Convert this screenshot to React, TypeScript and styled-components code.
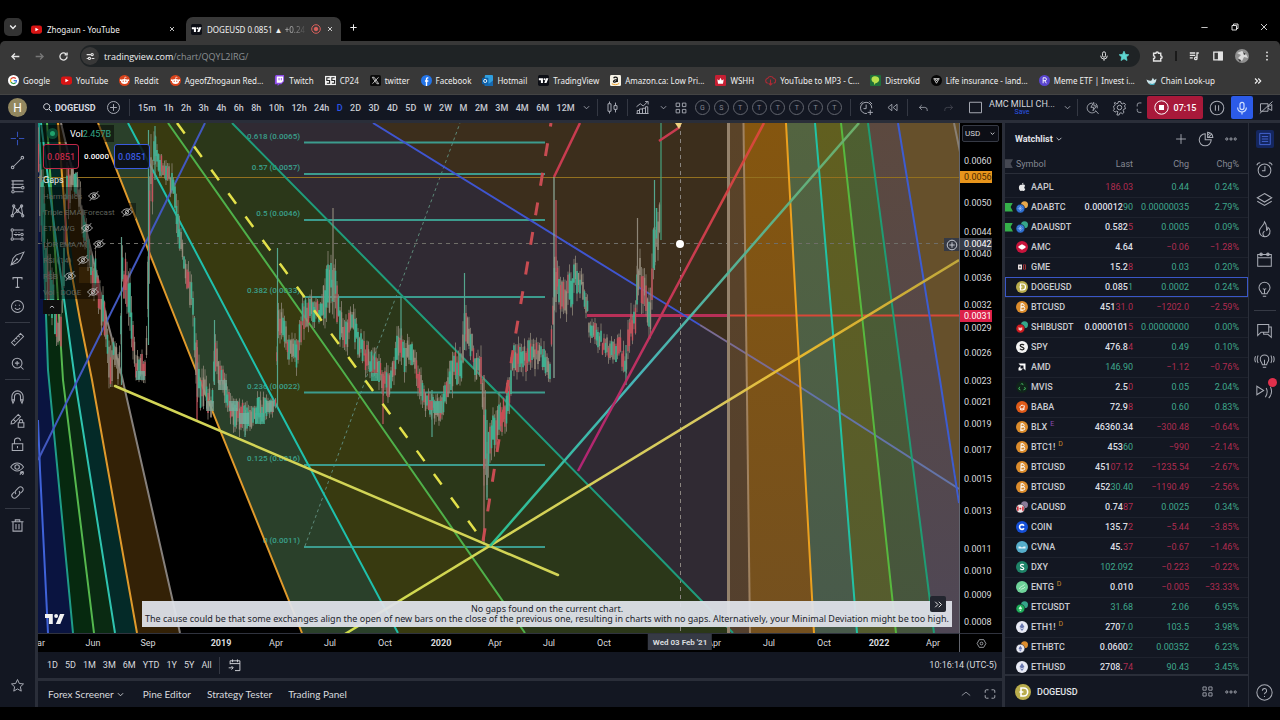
import React from "react";
import styled, { createGlobalStyle } from "styled-components";

const C = {
  panel: "#131722",
  line: "#2a2e39",
  text: "#c9ccd4",
  icon: "#a9acb5",
  up: "#3fa78c",
  down: "#b02c50",
  blue: "#2b55e8",
};

const Global = createGlobalStyle`
  * { box-sizing: border-box; }
  html, body { margin: 0; background: #000; }
  body { font-family: Roboto, "Open Sans", sans-serif; font-size: 10px; color: ${C.text}; }
  button, input { font: inherit; color: inherit; background: none; border: 0; padding: 0; margin: 0; }
  button { cursor: pointer; }
  a { color: inherit; text-decoration: none; }
`;

/* ---------- icons ---------- */

const icons: Record<string, React.ReactNode> = {
  chevron: <path d="M6 8l4 4 4-4" />,
  chevronUp: <path d="M3 12.500l7-5.500 7 5.500" />,
  close: <path d="M5 5l10 10M15 5L5 15" />,
  plus: <path d="M10 3v14M3 10h14" />,
  minus: <path d="M3 10h14" />,
  restore: <path d="M4 7h9v9H4zM7 7V4h9v9h-3" />,
  back: <path d="M17 10H4M9 4.500L3.500 10 9 15.500" />,
  forward: <path d="M3 10h13M11 4.500l5.500 5.500-5.500 5.500" />,
  reload: <path d="M16.500 10a6.500 6.500 0 1 1-2-4.700M16.500 2.500v4.500H12" />,
  site: <path d="M3 6.500h7M3 13.500h2M12 13.500h5M13 4.500a2 2 0 1 0 .01 0M8 11.500a2 2 0 1 0 .01 0" />,
  mic: <path d="M10 3a2.500 2.500 0 0 0-2.500 2.500v4a2.500 2.500 0 0 0 5 0v-4A2.500 2.500 0 0 0 10 3zM4.500 9.500a5.500 5.500 0 0 0 11 0M10 15v3" />,
  puzzle: <path d="M4 5h3.500a2 2 0 0 1 4 0H15v4a2 2 0 0 1 0 4v4H4v-4a2 2 0 0 0 0-4z" />,
  playlist: <path d="M3 5h9M3 9h9M3 13h5M15 14V5h3M15 14a2 2 0 1 1-4 0 2 2 0 0 1 4 0" />,
  sidePanel: (
    <>
      <path d="M3 3.500h14v13H3z" />
      <path d="M11 4h6v12h-6z" fill="currentColor" />
    </>
  ),
  dots: <path d="M10 4v.1M10 10v.1M10 16v.1" strokeWidth={3} strokeLinecap="round" />,
  more: (
    <>
      <circle cx="4" cy="10" r="1.600" />
      <circle cx="10" cy="10" r="1.600" />
      <circle cx="16" cy="10" r="1.600" />
    </>
  ),
  double: <path d="M4 5l5 5-5 5M10.500 5l5 5-5 5" />,
  search: <path d="M8.500 3a5.500 5.500 0 1 0 .01 0M12.500 12.500L17.500 17.500" />,
  plusCircle: (
    <>
      <circle cx="10" cy="10" r="8" />
      <path d="M10 5.500v9M5.500 10h9" />
    </>
  ),
  candles: <path d="M4 5h4v10H4zM6 2v3M6 15v3M12 7.500h4v5h-4zM14 3.500v4M14 12.500v4" />,
  indicators: <path d="M2 9l5-4 4 3 6-6M13.500 2h4v4M3 18v-4h3v4M6 18v-6h4v6M10 18v-7h4v7M14 18v-9h3v9zM2 18h16" />,
  grid: <path d="M3 3h5v5H3zM12 3h5v5h-5zM3 12h5v5H3zM12 12h5v5h-5z" strokeLinejoin="round" />,
  alarmPlus: <path d="M17 11a7.500 7.500 0 1 0-6.500 7M9.500 6v5.500H6M1.500 5.500l3.500-3.500M14 2l3.500 3.500M15 13v7M11.500 16.500h7" />,
  replay: <path d="M9 5v10l-6-5zM17 5v10l-6-5z" />,
  undo: <path d="M4 9h9a4 4 0 0 1 4 4v2M8 5L4 9l4 4" />,
  redo: <path d="M16 9H7a4 4 0 0 0-4 4v2M12 5l4 4-4 4" />,
  square: <path d="M2 3h16v14H2z" />,
  quick: <path d="M9 3a7 7 0 1 0 5 11.500M11 2l-4 7h4l-1 5 5-7h-3.500zM13.500 13.500l4.500 5M14 3.500a7 7 0 0 1 2 7" />,
  gear: (
    <>
      <circle cx="10" cy="10" r="3" />
      <path d="M8.500 2h3l.5 2.300 2 .9 2-1.300 2 2-1.300 2 .8 2 .5.600v1l-2.300.8-.8 2 1.200 2-2.100 2-2-1.300-2 .8-.5 2.200h-3L8 15.700l-2-.8-2 1.300-2.100-2.100 1.300-2-.8-2L2 9.500V8.500l1.500-.8.8-2L3 3.900l1.500-.6L6 5.100l2-.8z" />
    </>
  ),
  full: <path d="M13 3H9.500a3 3 0 0 0-3 3v2.500M6.500 12v2.500a3 3 0 0 0 3 3H13" />,
  pause: (
    <>
      <circle cx="10" cy="10" r="8.500" />
      <path d="M8 6.500v7M12 6.500v7" />
    </>
  ),
  camOff: <path d="M2 5h10v10H2zM12 9l5-3v8l-5-3M1 18L18 2" />,
  cross: <path d="M10 1v7M10 12v7M1 10h7M12 10h7" />,
  trend: (
    <>
      <circle cx="3.500" cy="16.500" r="1.700" />
      <circle cx="16.500" cy="3.500" r="1.700" />
      <path d="M5 15L15 5" />
    </>
  ),
  fib: (
    <>
      <path d="M2 2.500h16M2 7h16M2 11.500h13M6 17h12M4 2.500v12" />
      <circle cx="17" cy="11.500" r="1.700" />
      <circle cx="4" cy="17" r="1.700" />
    </>
  ),
  pattern: (
    <>
      <path d="M3 16L5 5l5 5 5-6 2 12-7-6-6 6" />
      <circle cx="5" cy="4" r="1.500" />
      <circle cx="15.500" cy="4" r="1.500" />
      <circle cx="3" cy="17" r="1.500" />
      <circle cx="17" cy="17" r="1.500" />
      <circle cx="10" cy="11" r="1.500" />
    </>
  ),
  projection: (
    <>
      <path d="M5 4h13M5 10h9M5 16h9M3 6v8M8 10v2M12 10v2M8 7v1M12 7v1" />
      <circle cx="3" cy="4" r="1.600" />
      <circle cx="3" cy="16" r="1.600" />
      <circle cx="16" cy="16" r="1.600" />
      <circle cx="16" cy="10" r="1.600" />
    </>
  ),
  brush: <path d="M18.500 1.500L8 5.500 4 10l-2.500 8.500L10 15.500l4-4.500zM1.500 18.500L9.500 10.500M8.500 9.500l2 2" />,
  type: <path d="M4 6V3.500h12V6M10 3.500v13M7.500 16.500h5" />,
  smile: (
    <>
      <circle cx="10" cy="10" r="8" />
      <path d="M7.500 7.500v1.500M12.500 7.500v1.500M6.500 12a4 4 0 0 0 7 0" />
    </>
  ),
  ruler: <path d="M2 14L14 2l4 4L6 18zM5 11l2 2M8 8l2 2M11 5l2 2" />,
  zoomIn: (
    <>
      <circle cx="9.500" cy="9.500" r="6.500" />
      <path d="M9.500 6.500v6M6.500 9.500h6M14 14l4 4" />
    </>
  ),
  magnet: <path d="M2.500 10a7.500 7.500 0 0 1 15 0v5l-1.500 4-2-4v-5a4 4 0 0 0-8 0v5l-2 4-1.500-4zM2.500 14.500H6M14 14.500h3.500" />,
  drawLock: <path d="M2 11L11 2l3 3L5 14l-3.500.5zM4.500 8.500l3 3M11 13h7.500v6H11zM12.500 13v-2a2.200 2.200 0 0 1 4.400 0v2" />,
  lock: <path d="M3 9h14v9H3zM6 9V6a4 4 0 0 1 8-1M10 12v3" />,
  eye: (
    <>
      <path d="M1 8c5-7 12-7 17 0-5 7-12 7-17 0z" />
      <circle cx="9.500" cy="8" r="3" />
      <path d="M13 18l5-4M16 18a2 2 0 1 0-2-2" />
    </>
  ),
  eyeOff: (
    <>
      <path d="M1 10c5-7 13-7 18 0-5 7-13 7-18 0z" />
      <circle cx="10" cy="10" r="3" />
      <path d="M3 18L17 2" />
    </>
  ),
  link: <path d="M8 12a3.500 3.500 0 0 1 0-5l3.500-3.500a3.500 3.500 0 0 1 5 5L14 11M12 8a3.500 3.500 0 0 1 0 5l-3.500 3.500a3.500 3.500 0 0 1-5-5L6 9" />,
  trash: <path d="M2 5h16M7 5V2.500h6V5M4 5v12.500h12V5M8 8v7M12 8v7" />,
  star: <path d="M10 2l2.400 5.300 5.600.6-4.200 3.900 1.200 5.700-5-2.900-5 2.900 1.200-5.700L2 7.900l5.600-.6z" />,
  pie: <path d="M9 3.500a7.500 7.500 0 1 0 7.500 7.500H9zM12 1.500v6.500h6.500A6.500 6.500 0 0 0 12 1.500zM12 5.500l3-3M13 8l4-4" />,
  list: <path d="M2.500 2h15v16h-15zM5.500 6.500h9M5.500 10h9M5.500 13.500h9" />,
  alarm: (
    <>
      <circle cx="10" cy="11" r="7.500" />
      <path d="M10.500 6v5.500H7M1 5a4 4 0 0 1 4-3M19 5a4 4 0 0 0-4-3" />
    </>
  ),
  layers: <path d="M10 3l8.500 5-8.500 5-8.500-5zM1.500 12l8.500 5 8.500-5" />,
  flame: <path d="M10 1c0 4-6 6-6 11 0 4 3 6.500 6 6.500s7-2 6.500-7c-.3-2-1-3-2.500-4 0 2-.5 3-1.500 3.500C12.500 7 12 3 10 1zM10 18.500c-3-2-2-5 0-6.500" />,
  calendar: (
    <>
      <path d="M2 4h16v14H2zM2 8h16" />
      <circle cx="6" cy="4" r="1.500" />
      <circle cx="14" cy="4" r="1.500" />
    </>
  ),
  bulb: <path d="M7 15c0-2-3.500-3.500-3.500-7a6.500 6.500 0 0 1 13 0c0 3.500-3.500 5-3.500 7zM8 18h4M8 9l2 1 2-1M10 10v5" />,
  chat: <path d="M2 3h13v9H6l-4 4zM15 6h3v12l-4-3.500H9V12" />,
  bulbLive: <path d="M7.500 15c0-2-2.500-3.500-2.500-6.500a5 5 0 0 1 10 0c0 3-2.500 4.500-2.500 6.500zM8 18h4M10 9v6M2.500 4c-1.500 3-1.500 6 0 9M17.500 4c1.500 3 1.500 6 0 9M-.5 5c-1 2-1 5 0 7M20.500 5c1 2 1 5 0 7" />,
  stream: <path d="M1 5l8 5-8 5zM12 7c2 4 1 8-1 11M17 6c2.500 5 1.500 9-2 13" />,
  help: (
    <>
      <circle cx="10" cy="10" r="9" />
      <path d="M7.500 8a2.500 2.500 0 1 1 3.500 2.200c-.8.4-1 .8-1 1.800M10 14v1.200" />
    </>
  ),
  goto: <path d="M3 9V4h14v14H10M3 8h14M6.500 2v4M13.500 2v4M1 14h6M5 11.500L7.500 14 5 16.500" />,
  target: (
    <>
      <path d="M6 3h8l4 7-4 7H6l-4-7z" />
      <circle cx="10" cy="10" r="2.500" />
    </>
  ),
  maximize: <path d="M2 8V5a2 2 0 0 1 2-2h3.500M12.500 3H16a2 2 0 0 1 2 2v3M18 12v3a2 2 0 0 1-2 2h-3.500M7.500 17H4a2 2 0 0 1-2-2v-3" />,
};

const Svg = styled.svg`
  display: block;
  flex: none;
  overflow: visible;
`;

function Icon({ name, size = 16, weight = 1.3, fill = "none" }: { name: string; size?: number; weight?: number; fill?: string }) {
  return (
    <Svg width={size} height={size} viewBox="0 0 20 20" fill={fill} stroke="currentColor" strokeWidth={weight} aria-hidden>
      {icons[name]}
    </Svg>
  );
}

/* ---------- browser frame ---------- */

const Page = styled.div`
  min-height: 100vh;
  display: flex;
  flex-direction: column;
  padding-bottom: 13px;
  background: #000;
`;

const TabStrip = styled.header`
  height: 41px;
  padding: 13px 3px 0 4px;
  display: flex;
  align-items: center;
  font-family: "Noto Sans", "Open Sans", sans-serif;
  font-size: 8px;
  color: #f0f0f0;
`;

const TabMenu = styled.button`
  width: 18px;
  height: 18px;
  border-radius: 5px;
  background: #333;
  display: grid;
  place-items: center;
`;

const Tab = styled.div<{ $active?: boolean }>`
  width: 155px;
  height: 24px;
  margin-left: ${(p) => (p.$active ? 1 : 8)}px;
  align-self: flex-end;
  padding: 0 7px 0 ${(p) => (p.$active ? 5 : 1)}px;
  border-radius: 7px 7px 0 0;
  background: ${(p) => (p.$active ? "#383838" : "transparent")};
  display: flex;
  align-items: center;
  gap: 5px;
`;

const TabTitle = styled.span`
  flex: 1;
  min-width: 0;
  white-space: nowrap;
`;

const Fade = styled.span`
  background: linear-gradient(90deg, #e4e4e4, #4a4a4a);
  background-clip: text;
  color: transparent;
`;

const Plain = styled.button<{ $w?: number; $color?: string }>`
  width: ${(p) => p.$w ?? 12}px;
  flex: none;
  display: grid;
  place-items: center;
  color: ${(p) => p.$color ?? "inherit"};
`;

const WindowButtons = styled.div`
  margin-left: auto;
  display: flex;
`;

const Toolbar = styled.div`
  height: 26px;
  padding: 4px 0 0 3px;
  background: #383838;
  border-radius: 5px 5px 0 0;
  display: flex;
  align-items: center;
  color: #e4e4e4;
`;

const Omnibox = styled.div`
  flex: 1;
  height: 22px;
  margin: 0 4px 0 5px;
  padding: 0 9px 0 1px;
  border-radius: 11px;
  background: #1f2325;
  display: flex;
  align-items: center;
  gap: 5px;
`;

const SiteChip = styled.button`
  width: 18px;
  height: 18px;
  border-radius: 9px;
  background: #383838;
  display: grid;
  place-items: center;
`;

const Url = styled.a`
  flex: 1;
  font-family: "Open Sans", "Noto Sans", sans-serif;
  font-size: 9px;
  color: #8d9194;
  b { font-weight: 400; color: #f1f1f1; }
`;

const ToolRule = styled.span`
  width: 2px;
  height: 10px;
  margin: 0 5px;
  background: #1a1a1a;
`;

const Avatar = styled.svg`
  width: 14px;
  height: 14px;
  margin: 0 5px;
`;

const Bookmarks = styled.nav`
  height: 28px;
  padding: 0 17px 0 8px;
  background: #383838;
  border-bottom: 1px solid #444;
  display: flex;
  align-items: center;
  gap: 11px;
  font-family: "Noto Sans", "Open Sans", sans-serif;
  font-size: 8px;
  color: #f0f0f0;
  overflow: hidden;
`;

const Bookmark = styled.a`
  display: flex;
  align-items: center;
  gap: 4px;
  white-space: nowrap;
`;

const MoreBookmarks = styled.button`
  margin-left: auto;
`;

const YouTubeMark = () => (
  <Svg width="11" height="11" viewBox="0 0 12 12">
    <rect y="1.500" width="12" height="9" rx="2.500" fill="#d81414" />
    <path d="M4.800 4l3.600 2-3.600 2z" fill="#fff" />
  </Svg>
);
const TvMark = () => (
  <Svg width="11" height="11" viewBox="0 0 20 20">
    <rect width="20" height="20" rx="3" fill="#0c0e15" />
    <path d="M1.500 6h7.500v8.500H5.300V9.500H1.500zM14.500 6h4.500l-3.600 8.500h-4z" fill="#fff" />
    <circle cx="11.800" cy="7.800" r="1.800" fill="#fff" />
  </Svg>
);
const Reddit = () => (
  <Svg width="11" height="11" viewBox="0 0 12 12">
    <circle cx="6" cy="6" r="6" fill="#d8431c" />
    <ellipse cx="6" cy="7" rx="3.800" ry="2.700" fill="#fff" />
    <path d="M6 4.300l.5-2 1.600.4" stroke="#fff" fill="none" strokeWidth=".7" />
    <circle cx="4.600" cy="6.700" r=".7" fill="#d8431c" />
    <circle cx="7.400" cy="6.700" r=".7" fill="#d8431c" />
    <circle cx="2" cy="5.600" r="1" fill="#fff" />
    <circle cx="10" cy="5.600" r="1" fill="#fff" />
  </Svg>
);
const B = ({ children }: { children: React.ReactNode }) => (
  <Svg width="11" height="11" viewBox="0 0 12 12">{children}</Svg>
);

const bookmarks: [string, React.ReactNode][] = [
  ["Google", <B key="i"><circle cx="6" cy="6" r="6" fill="#fff" /><path d="M8.500 4A3.300 3.300 0 0 0 3 4.700" stroke="#e0402f" strokeWidth="1.300" fill="none" /><path d="M3 4.700a3.300 3.300 0 0 0 .2 3" stroke="#f0b400" strokeWidth="1.300" fill="none" /><path d="M3.200 7.700a3.300 3.300 0 0 0 5 .8" stroke="#2f9e4c" strokeWidth="1.300" fill="none" /><path d="M8.200 8.500A3 3 0 0 0 9.200 6.200H6.200" stroke="#3b78e7" strokeWidth="1.300" fill="none" /></B>],
  ["YouTube", <YouTubeMark key="i" />],
  ["Reddit", <Reddit key="i" />],
  ["AgeofZhogaun Red...", <Reddit key="i" />],
  ["Twitch", <B key="i"><path d="M2 0h9v7L8 10H6l-2 2v-2H1V2z" fill="#8d4be8" /><path d="M3 1.500h7v5L8 8.500H3z" fill="#fff" /><path d="M5.500 3.200v2.600M8 3.200v2.600" stroke="#8d4be8" /></B>],
  ["CP24", <B key="i"><path d="M0 1h12v10H0z" fill="#f2f2f2" /><path d="M5 3H2v3h3v3H2M10.500 3h-3v3h3v3h-3" stroke="#222" strokeWidth="1.200" fill="none" /></B>],
  ["twitter", <B key="i"><rect width="12" height="12" rx="2" fill="#0b0b0b" /><path d="M2.500 2.500h2l5 7h-2zM9.300 2.500L2.700 9.500" stroke="#ddd" strokeWidth=".9" fill="none" /></B>],
  ["Facebook", <B key="i"><circle cx="6" cy="6" r="6" fill="#2374e8" /><path d="M8 3.200H7c-.8 0-1 .5-1 1.100V12M4.300 6.500H8" stroke="#fff" strokeWidth="1.500" fill="none" /></B>],
  ["Hotmail", <B key="i"><rect x="3" y="0" width="9" height="12" rx="1" fill="#2f9fe0" /><path d="M3 7l4.500 2.500L12 6v6H3z" fill="#1668b0" /><rect y="3" width="7" height="7" rx="1" fill="#0c5fa8" /><circle cx="3.500" cy="6.500" r="1.700" stroke="#fff" fill="none" /></B>],
  ["TradingView", <TvMark key="i" />],
  ["Amazon.ca: Low Pri...", <B key="i"><rect width="12" height="12" rx="1.500" fill="#f6f2e6" /><path d="M4 3.500c.5-1.500 4-1.700 4 .3V7.500M8 5c-5 0-5 3-2.800 2.800C7 7.600 8 6.500 8 5" stroke="#111" strokeWidth="1.300" fill="none" /><path d="M2 9.500c3 1.700 5.500 1.300 8-.3" stroke="#f19a1a" strokeWidth="1" fill="none" /></B>],
  ["WSHH", <B key="i"><rect width="12" height="12" rx="1.500" fill="#c61f33" /><path d="M2.500 4.500l2 1.500L6 3l1.500 3 2-1.500L8.700 9.500H3.300z" fill="#fff" /></B>],
  ["YouTube to MP3 - C...", <B key="i"><path d="M3 9a2.800 2.800 0 0 1 0-5.500 3.500 3.500 0 0 1 6.200 0A2.800 2.800 0 0 1 9.500 9M6 5v6M4 9l2 2 2-2" stroke="#b12a35" strokeWidth="1.200" fill="none" /></B>],
  ["DistroKid", <B key="i"><rect width="12" height="12" rx="1" fill="#1f6f3a" /><path d="M2 3c2-2.500 8-2 8 2 0 3-3 4-4 4L5 11 4 8C2 7.500 1 5 2 3z" fill="#b7e04c" /></B>],
  ["Life insurance - land...", <B key="i"><circle cx="6" cy="6" r="6" fill="#060606" /><path d="M3 4h6L6 9zM4.500 4L6 6.500 7.500 4" stroke="#fff" strokeWidth=".8" fill="none" /></B>],
  ["Meme ETF | Invest i...", <B key="i"><circle cx="6" cy="6" r="6" fill="#5a45d0" /><path d="M4.500 9V3h2a1.600 1.600 0 0 1 0 3.200h-2M6.300 6.200L8 9" stroke="#fff" strokeWidth="1" fill="none" /></B>],
  ["Chain Look-up", <B key="i"><path d="M.5 5c1 4 3 6 6 5.500S11 8 11.500 4L9 5.500 7.500 3 6 6C4 6.500 2 6 .5 5z" fill="#cfe6ea" /><path d="M3 8c2 2 5 2.500 7 0l-1 3H5z" fill="#39a5b8" /></B>],
];

/* ---------- chart header ---------- */

const Header = styled.div`
  height: 28px;
  padding-left: 8px;
  background: ${C.panel};
  border-bottom: 3px solid ${C.line};
  display: flex;
  align-items: center;
  color: ${C.icon};
`;

const UserBadge = styled.button`
  width: 19px;
  height: 19px;
  flex: none;
  border-radius: 50%;
  background: #92875f;
  color: #fff;
  font-size: 12px;
`;

const SymbolSearch = styled.button`
  margin-left: 15px;
  width: 56px;
  display: flex;
  align-items: center;
  gap: 2px;
  font-size: 9px;
  font-weight: 700;
  color: #d8dae0;
`;

const Rule = styled.span<{ $l?: number; $r?: number }>`
  width: 1px;
  height: 17px;
  flex: none;
  margin: 0 ${(p) => p.$r ?? 0}px 0 ${(p) => p.$l ?? 0}px;
  background: #343843;
`;

const Intervals = styled.div`
  flex: 0 0 437px;
  display: flex;
  justify-content: space-between;
  font-size: 9px;
  font-weight: 500;
  color: #c6c9d1;
`;

const Interval = styled.button<{ $on?: boolean }>`
  color: ${(p) => (p.$on ? C.blue : "inherit")};
`;

const Templates = styled.div`
  flex: 0 0 147px;
  display: flex;
  justify-content: space-between;
  margin: 0 8px 0 2px;
`;

const Template = styled.button`
  width: 15px;
  height: 15px;
  border: 1px solid #62656e;
  border-radius: 50%;
  font-size: 7px;
  color: #858892;
  display: grid;
  place-items: center;
`;

const RightTools = styled.div`
  margin-left: auto;
  height: 25px;
  display: flex;
  align-items: center;
`;

const LayoutName = styled.button`
  width: 70px;
  text-align: center;
  font-size: 9px;
  line-height: 9px;
  color: #d4d6dc;
  white-space: nowrap;
  small { display: block; font-size: 7px; line-height: 7px; color: ${C.blue}; }
`;

const Record = styled.button`
  width: 56px;
  height: 23px;
  border-radius: 2px;
  background: #a8193a;
  color: #fff;
  font-weight: 500;
  font-size: 9px;
  display: flex;
  align-items: center;
  justify-content: center;
  gap: 5px;
`;

const MicButton = styled.button`
  width: 22px;
  height: 23px;
  border-radius: 2px;
  background: #2c5be8;
  color: #cfe0ff;
  display: grid;
  place-items: center;
`;

/* ---------- body ---------- */

const Main = styled.main`
  flex: 1;
  min-height: 584px;
  display: flex;
  background: ${C.line};
  gap: 3px;
`;

const Tools = styled.nav`
  width: 35px;
  flex: none;
  padding: 3px 0 10px;
  background: ${C.panel};
  color: ${C.icon};
  display: flex;
  flex-direction: column;
  align-items: center;
`;

const Tool = styled.button<{ $last?: boolean; $on?: boolean }>`
  width: 34px;
  height: 24px;
  display: grid;
  place-items: center;
  color: ${(p) => (p.$on ? "#3350b8" : "inherit")};
  margin-top: ${(p) => (p.$last ? "auto" : 0)};
`;

const ToolDivider = styled.span`
  width: 25px;
  height: 1px;
  margin: 4px 0;
  background: #363a45;
`;

const ChartColumn = styled.section`
  flex: 1;
  min-width: 0;
  display: flex;
  flex-direction: column;
`;

const ChartGrid = styled.div`
  flex: 1;
  display: grid;
  grid-template-columns: 1fr 43px;
  grid-template-rows: 1fr 19px;
  background: #000;
`;

const Plot = styled.div`
  position: relative;
  overflow: hidden;
`;

const Canvas = styled.svg`
  position: absolute;
  inset: 0;
  width: 100%;
  height: 100%;
`;

const PriceAxis = styled.div`
  position: relative;
  border-left: 1px solid #62656e;
  color: #d8dade;
`;

const Currency = styled.select`
  position: absolute;
  top: 2px;
  left: 2px;
  width: 37px;
  height: 17px;
  padding: 0 0 0 2px;
  border: 1px solid #363a45;
  border-radius: 2px;
  background: #0c0e15;
  color: #d5d7dc;
  font: 8px Roboto, sans-serif;
  appearance: none;
`;

const CurrencyArrow = styled.span`
  position: absolute;
  top: 6px;
  right: 5px;
`;

const Price = styled.span<{ $bg?: string; $color?: string }>`
  position: absolute;
  left: 0;
  width: 32px;
  height: 12px;
  line-height: 12px;
  margin-top: -6px;
  padding-left: 4px;
  font-size: 9px;
  background: ${(p) => p.$bg ?? "transparent"};
  color: ${(p) => p.$color ?? "inherit"};
`;

const TimeAxis = styled.div`
  position: relative;
  overflow: hidden;
  border-top: 1px solid #30333e;
  font-size: 9px;
  color: #d8dade;
`;

const Time = styled.span<{ $mark?: boolean; $year?: boolean }>`
  position: absolute;
  top: 0;
  height: 16px;
  line-height: 18px;
  transform: translateX(-50%);
  white-space: nowrap;
  padding: 0 ${(p) => (p.$mark ? 5 : 0)}px;
  font-size: ${(p) => (p.$mark ? 8 : 9)}px;
  font-weight: ${(p) => (p.$mark || p.$year ? 700 : 400)};
  background: ${(p) => (p.$mark ? "#363a45" : "transparent")};
`;

const Corner = styled.div`
  border-top: 1px solid #30333e;
  border-left: 1px solid #62656e;
  display: grid;
  place-items: center;
`;

const Legend = styled.div`
  position: absolute;
  top: 2px;
  left: 2px;
  display: flex;
  flex-direction: column;
  align-items: flex-start;
  font-size: 9px;
`;

const LegendTop = styled.div`
  height: 17px;
  padding: 0 3px 0 10px;
  background: rgba(0, 0, 0, 0.5);
  display: flex;
  align-items: center;
  color: #fff;
  i { width: 5px; height: 5px; margin-right: 15px; border-radius: 50%; background: #21a36c; box-shadow: 0 0 0 3px #0c4a33; }
  em { font-style: normal; color: #35a384; }
`;

const Quote = styled.div`
  display: flex;
  align-items: center;
  gap: 5px;
  padding: 2px 0 2px 3px;
  font-size: 8px;
  font-weight: 500;
  color: #fff;
`;

const QuoteButton = styled.button<{ $color: string }>`
  width: 36px;
  height: 25px;
  border: 1px solid ${(p) => p.$color};
  border-radius: 3px;
  background: rgba(8, 10, 20, 0.85);
  color: ${(p) => p.$color};
  font-size: 9px;
`;

const Study = styled.div<{ $on?: boolean }>`
  height: 16px;
  padding: 2px 3px 0;
  display: flex;
  align-items: center;
  gap: 6px;
  white-space: nowrap;
  font-size: ${(p) => (p.$on ? 9 : 8)}px;
  color: ${(p) => (p.$on ? "#e6e6e6" : "#5f625b")};
  background: rgba(0, 0, 0, ${(p) => (p.$on ? 0 : 0.4)});
  svg { color: #b4b4b4; }
`;

const Collapse = styled.button`
  width: 18px;
  height: 14px;
  margin: 1px 0 0 3px;
  background: #0f0f0f;
  display: grid;
  place-items: center;
`;

const Watermark = styled.div`
  position: absolute;
  left: 7px;
  bottom: 8px;
`;

const Notice = styled.div`
  position: absolute;
  left: 104px;
  right: 7px;
  bottom: 6px;
  height: 26px;
  padding-top: 3px;
  background: rgba(222, 225, 233, 0.95);
  color: #23252c;
  text-align: center;
  font-family: "Noto Sans", "Open Sans", sans-serif;
  font-size: 9px;
  line-height: 10px;
  white-space: nowrap;
`;

const Scroll = styled.button`
  position: absolute;
  right: 13px;
  bottom: 21px;
  width: 16px;
  height: 16px;
  border-radius: 2px;
  background: #23262f;
  color: #e6e6e6;
  display: grid;
  place-items: center;
`;

const AddAlert = styled.button`
  position: absolute;
  right: 0;
  width: 15px;
  height: 13px;
  margin-top: -6px;
  background: #363a45;
  display: grid;
  place-items: center;
`;

const Ranges = styled.div`
  height: 26px;
  padding: 0 5px 0 9px;
  background: ${C.panel};
  display: flex;
  align-items: center;
  gap: 7px;
  font-size: 9px;
  color: #d8dade;
  time { margin-left: auto; }
`;

const BottomTabs = styled.div`
  height: 26px;
  margin-top: 3px;
  padding: 0 6px 0 10px;
  background: ${C.panel};
  display: flex;
  align-items: center;
  font-family: Lato, Roboto, sans-serif;
  font-size: 10px;
  color: #d8dade;
  button { display: flex; align-items: center; margin-right: 16px; }
`;

const BottomRight = styled.div`
  margin-left: auto;
  display: flex;
  gap: 12px;
  color: ${C.icon};
`;

/* ---------- watchlist ---------- */

const Side = styled.aside`
  width: 243px;
  flex: none;
  background: ${C.panel};
  display: flex;
  flex-direction: column;
`;

const SideHead = styled.div`
  height: 32px;
  padding: 0 10px;
  flex: none;
  display: flex;
  align-items: center;
  gap: 10px;
  color: ${C.icon};
`;

const SideTitle = styled.button`
  margin-right: auto;
  display: flex;
  align-items: center;
  font-size: 9px;
  font-weight: 700;
  color: #e2e4e9;
`;

const ListClip = styled.div`
  flex: 1 1 0;
  min-height: 0;
  overflow: hidden;
`;

const List = styled.table`
  width: 100%;
  border-collapse: collapse;
  table-layout: fixed;
  font-size: 9px;
  th, td { padding: 0; text-align: right; font-weight: 400; white-space: nowrap; }
  th { height: 18px; color: #858892; border-bottom: 1px solid ${C.line}; }
  th:first-child, td:first-child { text-align: left; }
  th:last-child, td:last-child { padding-right: 9px; }
`;

const Spacer = styled.tr`
  height: 4px;
`;

const Row = styled.tr<{ $selected?: boolean }>`
  height: 20px;
  border-bottom: 1px solid #1e222d;
  ${(p) => p.$selected && `outline: 1px solid #3a57c8; outline-offset: -1px;`}
`;

const Name = styled.div<{ $head?: boolean }>`
  display: flex;
  align-items: center;
  gap: 3px;
  font-weight: ${(p) => (p.$head ? 400 : 500)};
  color: ${(p) => (p.$head ? "inherit" : "#c8cad0")};
`;

const Sup = styled.sup<{ $color: string }>`
  align-self: flex-start;
  font-size: 7px;
  line-height: 7px;
  font-weight: 400;
  color: ${(p) => p.$color};
`;

const Flag = styled.i<{ $color: string }>`
  width: 8px;
  height: 9px;
  background: ${(p) => p.$color};
  clip-path: polygon(0 0, 100% 0, 70% 50%, 100% 100%, 0 100%);
`;

const Num = styled.td<{ $color: string }>`
  color: ${(p) => p.$color};
  span { color: #dcdee3; font-weight: 500; }
`;

const SideFoot = styled.div`
  height: 33px;
  padding: 0 10px;
  border-top: 2px solid ${C.line};
  display: flex;
  align-items: center;
  gap: 10px;
  color: ${C.icon};
  strong { flex: 1; margin-left: -4px; font-size: 9px; font-weight: 500; color: #e2e4e9; }
`;

const Rail = styled.nav`
  width: 31px;
  flex: none;
  margin-left: -2px;
  padding-top: 1px;
  background: ${C.panel};
  color: ${C.icon};
  display: flex;
  flex-direction: column;
  align-items: center;
`;

const RailButton = styled.button<{ $on?: boolean; $last?: boolean }>`
  position: relative;
  width: 30px;
  height: 30px;
  margin-top: ${(p) => (p.$last ? "auto" : 0)};
  display: grid;
  place-items: center;
  color: ${(p) => (p.$on ? "#4a6de0" : "inherit")};
  &::before {
    content: "";
    display: ${(p) => (p.$on ? "block" : "none")};
    position: absolute;
    inset: 6px;
    border-radius: 2px;
    background: #14265f;
  }
  svg { position: relative; }
`;

const RailDivider = styled.span`
  width: 22px;
  height: 1px;
  margin: 6px 0 4px;
  background: #363a45;
`;

const RailDot = styled.i`
  position: absolute;
  top: 3px;
  right: 3px;
  width: 9px;
  height: 9px;
  border-radius: 50%;
  background: #e0304c;
`;

/* mark drawn over a coin disc: shapes in a 12 x 12 box */
const marks: Record<string, React.ReactNode> = {
  apple: <path d="M6 4c1-.7 3-.5 3 1.200-1 .6-1 2.300.3 2.800C8.800 9.500 8 10.200 7.200 9.900c-.8-.3-1.400-.3-2.200 0C3.500 10.200 2.300 6.500 3.300 5c.7-1.200 2-1.300 2.700-1zM6 3.400c0-1 .6-1.600 1.400-1.700 0 1-.5 1.600-1.400 1.700z" fill="#e8e8e8" />,
  ada: <path d="M6 2.500v7M2.500 6h7M3.500 3.500l5 5M8.500 3.500l-5 5" stroke="#cfe0ff" strokeWidth=".9" strokeDasharray="1 .8" />,
  amc: <path d="M2.500 5.200l3.500-2 3.500 2v1.600l-3.500 2-3.500-2z" fill="#fff" />,
  gme: <><path d="M2 3.500h4v5H2z" fill="#e8e0e0" /><path d="M7 3.500h3v5H7z" fill="#a03038" /><path d="M4 5v2M8.500 4v4" stroke="#222" /></>,
  doge: <path d="M4.500 3h2a3 3 0 0 1 0 6h-2zM3.300 6h3" stroke="#fff" strokeWidth="1.200" fill="none" />,
  btc: <path d="M5 3h1.700a1.400 1.400 0 0 1 0 2.900H5M5 5.900h2.200a1.500 1.500 0 0 1 0 3.100H4.600M5.200 2.300L4.800 9.700M6.500 2.200l-.1 1M6.100 9l-.1 1" stroke="#fff" strokeWidth="1" fill="none" />,
  shib: <path d="M3.500 4l1.500 1h2l1.500-1v3.500L6 9 3.500 7.500z" fill="#f4c8c0" />,
  spy: <path d="M8 4.200C7.200 3 4.200 3 4.200 4.600S8 6 8 7.600 4.800 9.200 4 7.800" stroke="#222" strokeWidth="1.300" fill="none" />,
  amd: <path d="M2.500 2.500h7v7L7.500 7.600V4.500H4.400zM2.500 7l2-2v2.500H7l-2 2H2.500z" fill="#fff" />,
  mvis: <path d="M5 3.500l1-1.200 1.200 1.800M8.500 6l1 2-2 .8M4.500 9L2.700 8l1-2.200" stroke="#3fae5a" strokeWidth="1" fill="none" />,
  baba: <path d="M7.500 4.500C5.500 3.500 4 5 4 6.500s2 2 4 .5l.3-2.500M4 8.500c2 1 4 .3 4.800-.8" stroke="#fff" strokeWidth="1" fill="none" />,
  cad: <><path d="M2.500 3v6M9.500 3v6" stroke="#d02030" strokeWidth="2" /><circle cx="6" cy="6" r="1.300" fill="#d02030" /></>,
  coin: <path d="M8 4.700a2.400 2.400 0 1 0 0 2.600" stroke="#fff" strokeWidth="1.600" fill="none" />,
  cvna: <path d="M2.500 7.500v-2h1.700L6 6.500l1.800-1h1.700v2z" fill="#e4f4fa" />,
  dxy: <path d="M7.800 4.200C7 3 4.500 3.200 4.500 4.700S7.800 6 7.800 7.500 5 9 4.200 7.700" stroke="#fff" strokeWidth="1.200" fill="none" />,
  entg: <path d="M3.500 8C4 5 6 6 8.500 3.500M4.500 9C6 7 8 8 9 6" stroke="#c8f4d8" strokeWidth="1" fill="none" />,
  etc: <path d="M6 2.500L8.500 6 6 7.200 3.500 6zM3.700 7L6 8.200 8.300 7 6 9.800z" fill="#d8ffe6" />,
  eth: <path d="M6 2l2.500 4L6 7.500 3.500 6zM3.700 7L6 8.300 8.300 7 6 10z" fill="#6a78b0" />,
};

function CoinLogo({ logo, bg, pair, size = 12 }: { logo: string; bg: string; pair?: string; size?: number }) {
  return (
    <Svg width={size} height={size} viewBox="0 0 12 12">
      {pair && <circle cx="8.500" cy="3.700" r="3.500" fill={pair} />}
      <g transform={pair ? "translate(0 3.200) scale(.73)" : undefined}>
        <circle cx="6" cy="6" r="6" fill={bg} stroke={pair ? C.panel : "none"} strokeWidth=".7" />
        {marks[logo]}
      </g>
    </Svg>
  );
}

interface Item {
  s: string; logo: string; bg: string; pair?: string; w?: string; c?: string; last?: "u" | "d"; chg: string; pct: string; sup?: string; flag?: boolean;
}
const orange = "#dc8c2c";
const white = "#e8eaf4";
const items: Item[] = [
  { s: "AAPL", logo: "apple", bg: C.panel, c: "186.03", last: "d", chg: "0.44", pct: "0.24%" },
  { s: "ADABTC", logo: "ada", bg: "#2f6fd0", pair: "#e8a84a", w: "0.000012", c: "90", last: "u", chg: "0.00000035", pct: "2.79%", flag: true },
  { s: "ADAUSDT", logo: "ada", bg: "#2f6fd0", pair: "#35a58a", w: "0.582", c: "5", last: "d", chg: "0.0005", pct: "0.09%", flag: true },
  { s: "AMC", logo: "amc", bg: "#c8143c", w: "4.64", chg: "-0.06", pct: "-1.28%" },
  { s: "GME", logo: "gme", bg: C.panel, w: "15.2", c: "8", last: "d", chg: "0.03", pct: "0.20%" },
  { s: "DOGEUSD", logo: "doge", bg: "#b9ac4c", w: "0.085", c: "1", last: "u", chg: "0.0002", pct: "0.24%" },
  { s: "BTCUSD", logo: "btc", bg: orange, w: "451", c: "31.0", last: "d", chg: "-1202.0", pct: "-2.59%" },
  { s: "SHIBUSDT", logo: "shib", bg: "#d01c20", pair: "#35a58a", w: "0.0000101", c: "5", last: "d", chg: "0.00000000", pct: "0.00%" },
  { s: "SPY", logo: "spy", bg: "#f4f4f4", w: "476.8", c: "4", last: "d", chg: "0.49", pct: "0.10%" },
  { s: "AMD", logo: "amd", bg: C.panel, c: "146.90", last: "u", chg: "-1.12", pct: "-0.76%" },
  { s: "MVIS", logo: "mvis", bg: "#10241a", w: "2.5", c: "0", last: "d", chg: "0.05", pct: "2.04%" },
  { s: "BABA", logo: "baba", bg: "#e05a18", w: "72.9", c: "8", last: "d", chg: "0.60", pct: "0.83%" },
  { s: "BLX", logo: "btc", bg: orange, w: "46360.34", chg: "-300.48", pct: "-0.64%", sup: "E" },
  { s: "BTC1!", logo: "btc", bg: orange, w: "453", c: "60", last: "u", chg: "-990", pct: "-2.14%", sup: "D" },
  { s: "BTCUSD", logo: "btc", bg: orange, w: "451", c: "07.12", last: "d", chg: "-1235.54", pct: "-2.67%" },
  { s: "BTCUSD", logo: "btc", bg: orange, w: "452", c: "30.40", last: "u", chg: "-1190.49", pct: "-2.56%" },
  { s: "CADUSD", logo: "cad", bg: "#f0e4e6", pair: "#8a7a98", w: "0.74", c: "87", last: "d", chg: "0.0025", pct: "0.34%" },
  { s: "COIN", logo: "coin", bg: "#1650d8", w: "135.7", c: "2", last: "d", chg: "-5.44", pct: "-3.85%" },
  { s: "CVNA", logo: "cvna", bg: "#56aecb", w: "45.", c: "37", last: "d", chg: "-0.67", pct: "-1.46%" },
  { s: "DXY", logo: "dxy", bg: "#1f8468", c: "102.092", last: "u", chg: "-0.223", pct: "-0.22%" },
  { s: "ENTG", logo: "entg", bg: "#6fd39a", w: "0.010", chg: "-0.005", pct: "-33.33%", sup: "D" },
  { s: "ETCUSDT", logo: "etc", bg: "#1fae5a", pair: "#35a58a", c: "31.68", last: "u", chg: "2.06", pct: "6.95%" },
  { s: "ETH1!", logo: "eth", bg: white, w: "270", c: "7.0", last: "u", chg: "103.5", pct: "3.98%", sup: "D" },
  { s: "ETHBTC", logo: "eth", bg: white, pair: orange, w: "0.0600", c: "2", last: "u", chg: "0.00352", pct: "6.23%" },
  { s: "ETHUSD", logo: "eth", bg: white, w: "2708.", c: "74", last: "d", chg: "90.43", pct: "3.45%" },
];

const tone = (v: string) => (v.startsWith("-") ? C.down : C.up);

/* ---------- chart drawing ---------- */

/* price envelope: x, high, low */
const envelope: [number, number, number][] = [
  [38, 140, 200], [43, 180, 240], [48, 250, 310], [53, 280, 335], [58, 317, 350], [62, 290, 345], [66, 165, 240], [72, 160, 187], [78, 178, 205],
  [84, 200, 245], [90, 250, 290], [98, 262, 305], [104, 298, 340], [110, 335, 385], [115, 345, 375], [120, 350, 384], [122, 250, 300],
  [128, 262, 308], [133, 305, 352], [136, 350, 380], [145, 355, 382], [147, 330, 370], [149, 150, 270], [152, 160, 210], [155, 130, 160], [159, 150, 175],
  [168, 164, 182], [174, 176, 210], [179, 208, 250], [184, 256, 272], [190, 268, 305], [194, 300, 345], [198, 360, 405], [204, 375, 412],
  [212, 392, 418], [215, 340, 378], [222, 360, 388], [228, 385, 412], [234, 395, 426], [240, 400, 430], [248, 408, 436], [253, 398, 424],
  [264, 396, 422], [270, 395, 412], [276, 398, 414], [278, 300, 330], [284, 318, 345], [290, 340, 366], [298, 335, 368], [303, 290, 330],
  [312, 296, 322], [320, 302, 322], [327, 260, 318], [334, 255, 310], [339, 302, 345], [346, 318, 350], [352, 305, 338], [360, 330, 360],
  [370, 350, 378], [378, 352, 380], [384, 372, 402], [391, 365, 395], [397, 335, 370], [405, 335, 372], [410, 332, 358], [416, 355, 384],
  [424, 380, 410], [432, 392, 416], [440, 398, 424], [446, 380, 405], [452, 350, 392], [462, 348, 380], [464, 285, 345], [468, 305, 345],
  [474, 345, 372], [482, 358, 395], [484, 380, 470], [487, 430, 485], [491, 412, 458], [497, 405, 442], [504, 396, 428], [510, 372, 420],
  [513, 345, 375], [520, 342, 375], [530, 338, 370], [540, 345, 368], [550, 355, 380], [555, 250, 300], [560, 275, 310], [566, 275, 315],
  [575, 262, 300], [582, 275, 300], [587, 295, 320], [590, 322, 350], [597, 322, 345], [603, 335, 358], [612, 340, 362], [620, 335, 362],
  [625, 350, 380], [630, 315, 352], [635, 310, 340], [638, 250, 300], [644, 265, 305], [648, 285, 325], [651, 280, 330], [653, 210, 270], [658, 200, 250], [661, 170, 240],
];
const spikes: [number, number, number, string][] = [
  [121.500, 237, 385, "#5f9a86"], [148.500, 130, 345, "#54a58c"], [155, 126, 180, "#54a58c"], [197, 340, 420, "#c4525c"], [277.500, 248, 408, "#54a58c"],
  [333, 208, 300, "#8d8577"], [383, 372, 424, "#c4525c"], [401, 297, 340, "#54a58c"], [464.500, 273, 350, "#54a58c"], [484, 375, 545, "#a87870"],
  [487, 420, 500, "#54a58c"], [554, 177, 378, "#8fae9c"], [556, 200, 290, "#c4525c"], [626, 345, 385, "#54a58c"], [637.500, 218, 300, "#8d8577"], [654.500, 180, 270, "#54a58c"], [661, 123, 240, "#46a37f"],
  [432, 390, 437, "#54a58c"], [245, 405, 437, "#54a58c"], [214.500, 320, 385, "#54a58c"],
];

/* flat runs at low prices, where one tick fills a whole step: x, y, width, height */
const blocks: [number, number, number, number, string][] = [
  [136, 371, 9, 9, "#6fb3a0"], [206, 401, 8, 10, "#7fa896"], [218, 380, 9, 10, "#7fa896"], [229, 401, 9, 10, "#6fb3a0"], [239, 413, 10, 11, "#6fb3a0"],
  [255, 413, 10, 11, "#43b396"], [266, 401, 8, 11, "#7fa896"], [371, 373, 7, 8, "#43b396"], [428, 401, 5, 9, "#c4525c"], [433, 401, 9, 12, "#43b396"],
];

function buildBars() {
  const out: Record<string, string> = { up: "", down: "", mix: "", wick: "" };
  let seed = 17;
  const rnd = () => ((seed = (seed * 16807) % 2147483647) / 2147483647);
  let i = 0;
  for (let x = 38.5; x < 661; x += 1.5) {
    while (i < envelope.length - 2 && envelope[i + 1][0] < x) i++;
    const [x0, a0, b0] = envelope[i];
    const [x1, a1, b1] = envelope[i + 1];
    const t = (x - x0) / (x1 - x0);
    const hi = a0 + (a1 - a0) * t;
    const lo = b0 + (b1 - b0) * t;
    const span = lo - hi;
    const top = hi + rnd() * span * 0.45;
    const bottom = Math.min(lo, top + span * (0.35 + rnd() * 0.45));
    const px = x.toFixed(1);
    const k = rnd();
    const key = k < 0.42 ? "up" : k < 0.74 ? "mix" : "down";
    out[key] += `M${px} ${top.toFixed(1)}V${bottom.toFixed(1)}`;
    out.wick += `M${px} ${(top - rnd() * span * 0.35).toFixed(1)}V${(bottom + rnd() * span * 0.3).toFixed(1)}`;
  }
  return out;
}
const bars = buildBars();

const fibs: [number, string][] = [
  [142.500, "0.618 (0.0065)"], [174, "0.57 (0.0057)"], [220, "0.5 (0.0046)"], [297, "0.382 (0.0033)"], [392.500, "0.236 (0.0022)"], [465, "0.125 (0.0016)"], [547, "0 (0.0011)"],
];

const fills: [string, string][] = [
  ["38,123 960,123 960,633 38,633", "#302a33"],
  ["373,123 729,123 729,343", "#3c2e1c"],
  ["38,123 232,123 485,380 650,548 733,633 38,633", "#2b3719"],
  ["38,123 168,123 342,370 525,633 38,633", "#383a10"],
  ["38,123 128,123 263,380 398,633 38,633", "#2a402a"],
  ["38,123 98,123 197,373 302,633 38,633", "#000"],
  ["38,123 62,123 107,320 122,377 180,633 38,633", "#332106"],
  ["38,123 56,123 80,320 92,380 137,633 38,633", "#042a28"],
  ["38,123 44,123 75,380 115,633 38,633", "#0a2a12"],
  ["38,123 42,123 63,380 94,633 38,633", "#06290f"],
  ["38,123 39,123 48,370 73,633 38,633", "#0a1440"],
  ["728,123 745,123 750,633 728,633", "url(#brown)"],
  ["744,123 786,123 800,380 814,633 750,633", "url(#amber)"],
  ["786,123 815,123 837,380 857,633 814,633 800,380", "url(#sage)"],
  ["815,123 841,123 869,380 896,633 857,633 837,380", "url(#olive)"],
  ["841,123 868,123 902,380 934,633 896,633 869,380", "url(#moss)"],
  ["868,123 898,123 940,380 960,503 960,633 934,633 902,380", "url(#mauve)"],
  ["898,123 960,123 960,503 940,380", "#66502b"],
];

const gradients: [string, string, string][] = [
  ["brown", "#5a4328", "#54402e"], ["amber", "#85560f", "#74501f"], ["sage", "#536440", "#485a4b"],
  ["olive", "#615f1f", "#555c2f"], ["moss", "#4e5f30", "#46553e"], ["mauve", "#5c493f", "#4f4755"],
];

const rays: [string, string, number][] = [
  ["38,420 40,470 48,633", "#3f62d8", 2],
  ["39,123 48,370 73,633", "#1f9c88", 2],
  ["47,123 63,380 94,633", "#55b84e", 2],
  ["41,123 56,240 75,380 115,633", "#2fc4b0", 2],
  ["58,123 68,253 80,320 92,380 137,633", "#e09a2c", 2],
  ["61,123 84,220 107,320 122,377 180,633", "#86807c", 2],
  ["98,123 197,373 302,633", "#e09a2c", 2],
  ["128,123 263,380 398,633", "#1fc0ac", 2],
  ["168,123 342,370 525,633", "#4fb04a", 2],
  ["232,123 485,380 650,548 733,633", "#1f9c7c", 2],
  ["205,123 38,460", "#4258c0", 2],
  ["373,123 640,288 700,325", "#3f55d0", 2],
  ["700,325 800,387", "#7a6c94", 2],
  ["800,387 959,489", "#6474a8", 2],
  ["728.500,123 728.500,633", "#94826c", 3],
  ["743.500,123 750,633", "#a08260", 2],
  ["786,123 800,380 814,633", "#eba01f", 2],
  ["815,123 837,380 857,633", "#22c2a4", 2],
  ["841,123 869,380 896,633", "#57b83e", 2],
  ["868,123 902,380 934,633", "#1f9c74", 2],
  ["898,123 940,380 959,503", "#3d5cd0", 2],
  ["954,123 960,152", "#8a8074", 2],
];

const prices: [number, string, string?, string?][] = [
  [161, "0.0060"], [177, "0.0056", "#e8951c", "#4a2a00"], [203, "0.0050"], [232, "0.0044"], [254, "0.0040"], [244, "0.0042", "#363a45", "#fff"], [278, "0.0036"],
  [305, "0.0032"], [316, "0.0031", "#dc2048", "#fff"], [328, "0.0029"], [353, "0.0026"], [381, "0.0023"], [402, "0.0021"], [424, "0.0019"], [450, "0.0017"],
  [479, "0.0015"], [511, "0.0013"], [549, "0.0011"], [571, "0.0010"], [595, "0.0009"], [622, "0.0008"],
];

const times: [number, string, boolean?][] = [
  [41, "ar"], [93, "Jun"], [148, "Sep"], [221, "2019"], [276, "Apr"], [330, "Jul"], [385, "Oct"], [441, "2020"], [495, "Apr"], [549, "Jul"],
  [604, "Oct"], [714, "Apr"], [769, "Jul"], [824, "Oct"], [879, "2022"], [933, "Apr"], [680, "Wed 03 Feb '21", true],
];

const pctY = (y: number) => `${((y - 123) / 510) * 100}%`;
const pctX = (x: number) => `${((x - 38) / 921) * 100}%`;

function Drawing() {
  return (
    <Canvas viewBox="38 123 921 510" preserveAspectRatio="xMaxYMid slice" role="img" aria-label="DOGEUSD daily price chart">
      <defs>
        {gradients.map(([id, a, b]) => (
          <linearGradient key={id} id={id} x1="0" y1="0" x2="0" y2="1">
            <stop offset="0" stopColor={a} />
            <stop offset="1" stopColor={b} />
          </linearGradient>
        ))}
        <linearGradient id="rise" gradientUnits="userSpaceOnUse" x1="578" y1="471" x2="764" y2="123">
          <stop offset="0" stopColor="#b02474" />
          <stop offset="1" stopColor="#d84a38" />
        </linearGradient>
        <linearGradient id="gold" gradientUnits="userSpaceOnUse" x1="345" y1="633" x2="959" y2="260">
          <stop offset="0" stopColor="#cfdc4c" />
          <stop offset=".6" stopColor="#d8c860" />
          <stop offset=".72" stopColor="#e8b82c" />
          <stop offset="1" stopColor="#c0a83c" />
        </linearGradient>
        <linearGradient id="aqua" gradientUnits="userSpaceOnUse" x1="490" y1="546" x2="859" y2="123">
          <stop offset="0" stopColor="#2cc090" />
          <stop offset=".4" stopColor="#46b4b8" />
          <stop offset="1" stopColor="#6cae68" />
        </linearGradient>
      </defs>
      {fills.map(([points, fill]) => <polygon key={points} points={points} fill={fill} />)}
      <path d="M38 243.500H960" stroke="#6f6e68" strokeDasharray="4 4" />
      <path d="M680.500 123V633" stroke="#8a8580" strokeDasharray="4 4" />
      <path d="M305 546L380 340 460 123" fill="none" stroke="#5c8878" strokeDasharray="3 3" />
      {fibs.map(([y, label]) => (
        <g key={label}>
          <path d={`M304 ${y}H545`} stroke="#3c9c8e" strokeWidth="2" />
          <text x="300" y={y - 4} textAnchor="end" fontSize="8" fontWeight="500" fill="#3aa08c">{label}</text>
        </g>
      ))}
      <path d="M38 177.500H960" stroke="#93701f" />
      <path d="M587 315.500H730" stroke="#b83058" strokeWidth="3" />
      <path d="M730 315.500H960" stroke="#d84838" strokeWidth="2" />
      {rays.map(([points, stroke, w]) => <polyline key={points} points={points} fill="none" stroke={stroke} strokeWidth={w} />)}
      <g fill="none">
        <path d={bars.wick} stroke="#8d8577" strokeWidth=".8" />
        <path d={bars.mix} stroke="#968c7c" strokeWidth="1.400" />
        <path d={bars.down} stroke="#c4525c" strokeWidth="1.400" />
        <path d={bars.up} stroke="#3fb090" strokeWidth="1.600" />
        {spikes.map(([x, a, b, c]) => <path key={`${x}-${a}`} d={`M${x} ${a}V${b}`} stroke={c} strokeWidth="1.200" />)}
      </g>
      {blocks.map(([x, y, w, h, c]) => <rect key={x} x={x} y={y} width={w} height={h} fill={c} opacity=".75" />)}
      <path d="M177 123L480 537" stroke="#e2e04a" strokeWidth="2.500" strokeDasharray="13 16" />
      <path d="M483 541L515 338 551 123" fill="none" stroke="#c84c52" strokeWidth="3" strokeDasharray="13 17" />
      <path d="M115 386L558 575" stroke="#d2d456" strokeWidth="2.500" strokeLinecap="round" />
      <path d="M345 634L959 260" stroke="url(#gold)" strokeWidth="2.500" />
      <path d="M490 546L859 123" stroke="url(#aqua)" strokeWidth="2.500" />
      <path d="M578 471L764 123" stroke="url(#rise)" strokeWidth="2.500" />
      <path d="M554 177L580 123" stroke="#c83c50" strokeWidth="2.500" />
      <path d="M659 141L680 127" stroke="#c83c50" strokeWidth="2.500" />
      <path d="M675 123h7l-3 6z" fill="#f0d080" />
      <circle cx="680" cy="244" r="4" fill="#fff" />
    </Canvas>
  );
}

const studies = ["Harmonics", "Triple EMA Forecast", "ETMAVG", "LOR EMA/M", "RSI (14)", "RSB", "Vol · DOGE"];

const drawTools = ["cross", "trend", "fib", "pattern", "projection", "brush", "type", "smile", "|", "ruler", "zoomIn", "|", "magnet", "drawLock", "lock", "eye", "link", "|", "trash"];

export default function App() {
  return (
    <Page>
      <Global />
      <TabStrip>
        <TabMenu aria-label="Search tabs"><Icon name="chevron" size={14} weight={2} /></TabMenu>
        <Tab>
          <YouTubeMark />
          <TabTitle>Zhogaun - YouTube</TabTitle>
          <Plain aria-label="Close tab"><Icon name="close" size={8} weight={2} /></Plain>
        </Tab>
        <Tab $active>
          <TvMark />
          <TabTitle>DOGEUSD 0.0851 ▲ <Fade>+0.24</Fade></TabTitle>
          <Svg width="10" height="10" viewBox="0 0 10 10" fill="none" stroke="#d9605c">
            <circle cx="5" cy="5" r="4.300" />
            <circle cx="5" cy="5" r="1.800" fill="#d9605c" />
          </Svg>
          <Plain $w={8} aria-label="Close tab"><Icon name="close" size={8} weight={2} /></Plain>
        </Tab>
        <Plain $w={24} aria-label="New tab"><Icon name="plus" size={9} weight={2.2} /></Plain>
        <WindowButtons>
          <Plain $w={30} aria-label="Minimize"><Icon name="minus" size={9} weight={1.8} /></Plain>
          <Plain $w={32} aria-label="Restore"><Icon name="restore" size={10} weight={1.8} /></Plain>
          <Plain $w={26} aria-label="Close"><Icon name="close" size={12} weight={1.4} /></Plain>
        </WindowButtons>
      </TabStrip>

      <Toolbar>
        <Plain $w={24} aria-label="Back"><Icon name="back" size={11} weight={2.4} /></Plain>
        <Plain $w={24} $color="#777" aria-label="Forward"><Icon name="forward" size={11} weight={2.4} /></Plain>
        <Plain $w={24} aria-label="Reload"><Icon name="reload" size={11} weight={2.4} /></Plain>
        <Omnibox>
          <SiteChip aria-label="Site information"><Icon name="site" size={11} weight={2} /></SiteChip>
          <Url href="#"><b>tradingview.com</b>/chart/QQYL2IRG/</Url>
          <Plain $w={16} aria-label="Voice"><Icon name="mic" size={12} weight={1.6} /></Plain>
          <Plain $w={14} $color="#5ed6d0" aria-label="Bookmark"><Icon name="star" size={12} fill="currentColor" /></Plain>
        </Omnibox>
        <Plain $w={26} aria-label="Extensions"><Icon name="puzzle" size={13} weight={2.2} /></Plain>
        <ToolRule />
        <Plain $w={24} aria-label="Media"><Icon name="playlist" size={12} weight={2.2} /></Plain>
        <Plain $w={24} aria-label="Side panel"><Icon name="sidePanel" size={12} weight={2.2} /></Plain>
        <Avatar viewBox="0 0 14 14">
          <circle cx="7" cy="7" r="7" fill="#8f8f8f" />
          <path d="M2 4l4 2-3 3 4 3 2-4 4 1-2-4-4-3z" fill="#dcdcdc" />
          <path d="M3 10l3 1-1 2zM8 3l3 2-2 1z" fill="#333" />
        </Avatar>
        <Plain $w={26} aria-label="Menu"><Icon name="dots" size={12} /></Plain>
      </Toolbar>

      <Bookmarks aria-label="Bookmarks">
        {bookmarks.map(([label, mark]) => <Bookmark key={label} href="#">{mark}{label}</Bookmark>)}
        <MoreBookmarks aria-label="More bookmarks"><Icon name="double" size={10} weight={2.2} /></MoreBookmarks>
      </Bookmarks>

      <Header>
        <UserBadge>H</UserBadge>
        <SymbolSearch><Icon name="search" size={11} weight={1.8} />DOGEUSD</SymbolSearch>
        <Plain $w={30} aria-label="Compare"><Icon name="plusCircle" size={15} /></Plain>
        <Rule $l={1} $r={8} />
        <Intervals>
          {"15m 1h 2h 3h 4h 6h 8h 10h 12h 24h D 2D 3D 4D 5D W 2W M 2M 3M 4M 6M 12M".split(" ").map((v) => (
            <Interval key={v} $on={v === "D"}>{v}</Interval>
          ))}
        </Intervals>
        <Plain $w={22} aria-label="More intervals"><Icon name="chevron" size={13} /></Plain>
        <Rule />
        <Plain $w={29} aria-label="Chart type"><Icon name="candles" size={15} /></Plain>
        <Rule />
        <Plain $w={29} aria-label="Indicators"><Icon name="indicators" size={15} /></Plain>
        <Plain $w={12} aria-label="Favorite indicators"><Icon name="chevron" size={13} /></Plain>
        <Plain $w={24} aria-label="Indicator templates"><Icon name="grid" size={14} /></Plain>
        <Templates>
          {["G", "S", "T", "T", "T", "T", "T", "T"].map((t, i) => <Template key={i}>{t}</Template>)}
        </Templates>
        <Rule />
        <Plain $w={30} aria-label="Alert"><Icon name="alarmPlus" size={15} /></Plain>
        <Plain $w={22} aria-label="Replay"><Icon name="replay" size={13} /></Plain>
        <Rule $l={4} $r={2} />
        <Plain $w={26} aria-label="Undo"><Icon name="undo" size={12} /></Plain>
        <Plain $w={25} $color="#484b55" aria-label="Redo"><Icon name="redo" size={12} /></Plain>
        <RightTools>
          <Plain $w={24} aria-label="Layout"><Icon name="square" size={15} /></Plain>
          <LayoutName>AMC MILLI CH...<small>Save</small></LayoutName>
          <Plain $w={20} aria-label="Layouts"><Icon name="chevron" size={13} /></Plain>
          <Rule $r={2} />
          <Plain $w={26} aria-label="Quick search"><Icon name="quick" size={14} /></Plain>
          <Plain $w={26} aria-label="Settings"><Icon name="gear" size={15} /></Plain>
          <Plain $w={15} aria-label="Fullscreen"><Icon name="full" size={13} /></Plain>
          <Record>
            <Svg width="15" height="15" viewBox="0 0 15 15">
              <circle cx="7.500" cy="7.500" r="6.700" fill="none" stroke="#fff" />
              <rect x="5" y="5" width="5" height="5" fill="#fff" />
            </Svg>
            07:15
          </Record>
          <Plain $w={28} aria-label="Pause"><Icon name="pause" size={16} /></Plain>
          <MicButton aria-label="Microphone"><Icon name="mic" size={16} weight={1.5} /></MicButton>
          <Plain $w={27} aria-label="Camera"><Icon name="camOff" size={15} /></Plain>
        </RightTools>
      </Header>

      <Main>
        <Tools aria-label="Drawing tools">
          {drawTools.map((t, i) => (t === "|" ? <ToolDivider key={i} /> : <Tool key={i} $on={t === "cross"} aria-label={t}><Icon name={t} size={15} weight={1.4} /></Tool>))}
          <Tool $last aria-label="Favorites"><Icon name="star" size={15} /></Tool>
        </Tools>

        <ChartColumn>
          <ChartGrid>
            <Plot>
              <Drawing />
              <Legend>
                <LegendTop><i />Vol<em>2.457B</em></LegendTop>
                <Quote>
                  <QuoteButton $color="#c02848">0.0851</QuoteButton>
                  0.0000
                  <QuoteButton $color="#3a5ae0">0.0851</QuoteButton>
                </Quote>
                <Study $on>Gaps</Study>
                {studies.map((label) => <Study key={label}>{label}<Icon name="eyeOff" size={12} weight={1.6} /></Study>)}
                <Collapse aria-label="Collapse legend"><Icon name="chevronUp" size={6} weight={3} /></Collapse>
              </Legend>
              <Watermark>
                <Svg width="20" height="12" viewBox="0 0 36 20" fill="#f2f2f2">
                  <path d="M0 1h14v18H7V8H0zM27 1h8l-7.500 18h-8z" />
                  <circle cx="20" cy="4.500" r="3.500" />
                </Svg>
              </Watermark>
              <Notice>
                <div>No gaps found on the current chart.</div>
                <div>The cause could be that some exchanges align the open of new bars on the close of the previous one, resulting in charts with no gaps. Alternatively, your Minimal Deviation might be too high.</div>
              </Notice>
              <Scroll aria-label="Scroll to latest bar"><Icon name="double" size={11} weight={1.8} /></Scroll>
              <AddAlert style={{ top: pctY(244) }} aria-label="Add alert"><Icon name="plusCircle" size={12} weight={1.6} /></AddAlert>
            </Plot>
            <PriceAxis>
              <Currency aria-label="Currency" defaultValue="USD"><option>USD</option></Currency>
              <CurrencyArrow><Icon name="chevron" size={9} weight={2} /></CurrencyArrow>
              {prices.map(([y, label, bg, color]) => <Price key={label} $bg={bg} $color={color} style={{ top: pctY(y) }}>{label}</Price>)}
            </PriceAxis>
            <TimeAxis>
              {times.map(([x, label, mark]) => <Time key={x} $mark={mark} $year={label.startsWith("20")} style={{ left: pctX(x) }}>{label}</Time>)}
            </TimeAxis>
            <Corner><Icon name="target" size={11} /></Corner>
          </ChartGrid>
          <Ranges>
            {["1D", "5D", "1M", "3M", "6M", "YTD", "1Y", "5Y", "All"].map((r) => <button key={r}>{r}</button>)}
            <Rule $r={1} />
            <button aria-label="Go to date"><Icon name="goto" size={14} /></button>
            <time>10:16:14 (UTC-5)</time>
          </Ranges>
          <BottomTabs>
            <button>Forex Screener<Icon name="chevron" size={13} /></button>
            <button>Pine Editor</button>
            <button>Strategy Tester</button>
            <button>Trading Panel</button>
            <BottomRight>
              <Icon name="chevronUp" size={12} />
              <Icon name="maximize" size={12} weight={1.6} />
            </BottomRight>
          </BottomTabs>
        </ChartColumn>

        <Side>
          <SideHead>
            <SideTitle>Watchlist<Icon name="chevron" size={12} /></SideTitle>
            <Icon name="plus" size={14} />
            <Icon name="pie" size={16} />
            <Icon name="more" size={14} />
          </SideHead>
          <ListClip>
            <List>
              <colgroup><col width="71" /><col width="57" /><col width="56" /><col /></colgroup>
              <thead>
                <tr><th><Name $head><Flag $color="#454852" />Symbol</Name></th><th>Last</th><th>Chg</th><th>Chg%</th></tr>
              </thead>
              <tbody>
                <Spacer />
                {items.map((r, i) => (
                  <Row key={i} $selected={r.s === "DOGEUSD"}>
                    <td>
                      <Name>
                        <Flag $color={r.flag ? "#35b04a" : "transparent"} />
                        <CoinLogo logo={r.logo} bg={r.bg} pair={r.pair} />
                        {r.s}
                        {r.sup && <Sup $color={r.sup === "E" ? "#8a4bb0" : "#c98a2c"}>{r.sup}</Sup>}
                      </Name>
                    </td>
                    <Num $color={r.last === "u" ? C.up : C.down}>{r.w && <span>{r.w}</span>}{r.c}</Num>
                    <Num $color={tone(r.chg)}>{r.chg.replace("-", "−")}</Num>
                    <Num $color={tone(r.pct)}>{r.pct.replace("-", "−")}</Num>
                  </Row>
                ))}
              </tbody>
            </List>
          </ListClip>
          <SideFoot>
            <CoinLogo logo="doge" bg="#b9ac4c" size={16} />
            <strong>DOGEUSD</strong>
            <Icon name="grid" size={13} />
            <Icon name="more" size={14} />
          </SideFoot>
        </Side>

        <Rail aria-label="Panels">
          {["list", "alarm", "layers", "flame", "calendar", "bulb"].map((n) => (
            <RailButton key={n} $on={n === "list"} aria-label={n}><Icon name={n} size={n === "list" ? 14 : 17} weight={1.2} /></RailButton>
          ))}
          <RailDivider />
          {["chat", "bulbLive", "stream"].map((n) => (
            <RailButton key={n} aria-label={n}><Icon name={n} size={17} weight={1.2} />{n === "stream" && <RailDot />}</RailButton>
          ))}
          <RailButton $last aria-label="Help"><Icon name="help" size={17} weight={1.2} /></RailButton>
        </Rail>
      </Main>
    </Page>
  );
}
